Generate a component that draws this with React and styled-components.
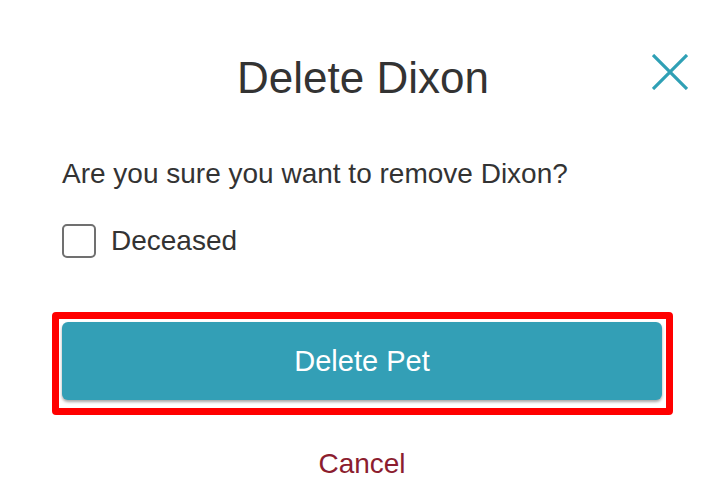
import React from 'react';
import styled, { createGlobalStyle } from 'styled-components';

const GlobalStyle = createGlobalStyle`
   html, body {
      margin: 0;
      padding: 0;
      background: #ffffff;
   }
   body {
      font-family: "Liberation Sans", Arial, Helvetica, sans-serif;
      color: #333333;
   }
`;

const Modal = styled.div`
   width: 726px;
   height: 498px;
   box-sizing: border-box;
   padding-top: 53px;
   display: flex;
   flex-direction: column;
   background: #ffffff;
   overflow: hidden;
`;

const Header = styled.div`
   display: grid;
   grid-template-columns: 1fr auto 1fr;
   align-items: start;
   padding: 0 38px;
`;

const Title = styled.h2`
   grid-column: 2;
   margin: 0;
   font-size: 44px;
   line-height: 50px;
   font-weight: normal;
   color: #333333;
`;

const CloseButton = styled.button`
   grid-column: 3;
   justify-self: end;
   width: 36px;
   height: 36px;
   margin-top: 1px;
   padding: 0;
   border: none;
   background: none;
   cursor: pointer;
   display: flex;
`;

const Body = styled.div`
   display: flex;
   flex-direction: column;
   padding: 0 64px 0 62px;
`;

const Question = styled.p`
   margin: 55px 0 0 0;
   font-size: 28px;
   line-height: 32px;
   color: #333333;
`;

const CheckRow = styled.label`
   display: flex;
   align-items: center;
   gap: 15px;
   margin-top: 34px;
   font-size: 28px;
   line-height: 32px;
   color: #333333;
`;

const CheckBox = styled.span`
   width: 34px;
   height: 34px;
   box-sizing: border-box;
   border: 2px solid #707070;
   border-radius: 5px;
   background: #ffffff;
`;

const Highlight = styled.div`
   margin: 54px -11px 0 -10px;
   border: 7px solid #ff0000;
   border-radius: 4px;
   padding: 3px 4px 8px 3px;
`;

const PrimaryButton = styled.button`
   width: 100%;
   height: 78px;
   border: none;
   border-radius: 6px;
   background: #339fb6;
   color: #ffffff;
   font-family: "Liberation Sans", Arial, Helvetica, sans-serif;
   font-size: 29px;
   box-shadow: 0 2px 3px rgba(0, 0, 0, 0.35);
   cursor: pointer;
   display: block;
`;

const CancelLink = styled.button`
   align-self: center;
   margin-top: 33px;
   padding: 0;
   border: none;
   background: none;
   color: #8c1d2f;
   font-family: "Liberation Sans", Arial, Helvetica, sans-serif;
   font-size: 28px;
   line-height: 32px;
   cursor: pointer;
`;

const CloseIcon = () => (
   <svg width="36" height="36" viewBox="0 0 36 36">
      <path d="M1 1 L35 35 M35 1 L1 35" stroke="#2fa0b5" strokeWidth="3.2" fill="none" />
   </svg>
);

const App = () => {
   const name = 'Dixon';

   return (
      <>
         <GlobalStyle />
         <Modal>
            <Header>
               <Title>Delete {name}</Title>
               <CloseButton aria-label="Close">
                  <CloseIcon />
               </CloseButton>
            </Header>
            <Body>
               <Question>Are you sure you want to remove {name}?</Question>
               <CheckRow>
                  <CheckBox />
                  Deceased
               </CheckRow>
               <Highlight>
                  <PrimaryButton>Delete Pet</PrimaryButton>
               </Highlight>
               <CancelLink>Cancel</CancelLink>
            </Body>
         </Modal>
      </>
   );
};

export default App;
